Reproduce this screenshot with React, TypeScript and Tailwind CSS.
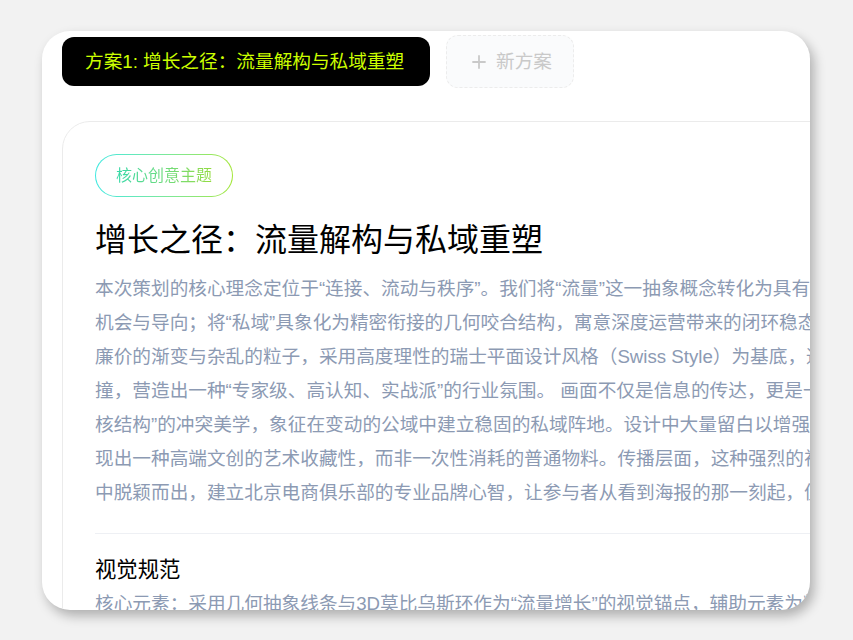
import { memo } from "react";

const introLines = [
  "本次策划的核心理念定位于“连接、流动与秩序”。我们将“流量”这一抽象概念转化为具有方向感的动态光束，象征",
  "机会与导向；将“私域”具象化为精密衔接的几何咬合结构，寓意深度运营带来的闭环稳态与长期价值。视觉上摒弃",
  "廉价的渐变与杂乱的粒子，采用高度理性的瑞士平面设计风格（Swiss Style）为基底，通过冷静与热烈的碰",
  "撞，营造出一种“专家级、高认知、实战派”的行业氛围。 画面不仅是信息的传达，更是一种“流动线条”与“坚",
  "核结构”的冲突美学，象征在变动的公域中建立稳固的私域阵地。设计中大量留白以增强呼吸感与高级感，呈",
  "现出一种高端文创的艺术收藏性，而非一次性消耗的普通物料。传播层面，这种强烈的视觉张力能在信息流",
  "中脱颖而出，建立北京电商俱乐部的专业品牌心智，让参与者从看到海报的那一刻起，便感受到价值。",
];

const specLines = [
  "核心元素：采用几何抽象线条与3D莫比乌斯环作为“流量增长”的视觉锚点，辅助元素为精密网格与坐标刻度。",
];

const PlusIcon = () => (
  <svg width="14" height="14" viewBox="0 0 14 14" fill="none">
    <path d="M7 1v12M1 7h12" stroke="currentColor" strokeWidth="1.8" strokeLinecap="round" />
  </svg>
);

const App = () => {
  return (
    <div
      className="min-h-screen bg-[#f2f2f2] pt-[31px] pl-[42px]"
      style={{ fontFamily: '"Liberation Sans", "Noto Sans CJK SC", sans-serif' }}
    >
      <div className="w-[768px] h-[579px] bg-white rounded-[28px] shadow-[4px_6px_12px_rgba(0,0,0,0.28)] overflow-hidden flex flex-col">
        {/* tabs */}
        <div className="flex items-center gap-4 pl-5 pt-1">
          <div className="h-[49px] w-[368px] pl-[23px] rounded-xl bg-black flex items-center text-[18.67px] text-[#ccff00] whitespace-nowrap">
            方案1: 增长之径：流量解构与私域重塑
          </div>
          <div className="h-[53px] w-[128px] pl-[25px] rounded-xl border border-dashed border-[#ececec] bg-[#fafbfc] flex items-center gap-[10px] text-[18.67px] text-[#c9c9c9] whitespace-nowrap">
            <PlusIcon />
            新方案
          </div>
        </div>

        {/* plan card */}
        <div className="mt-[33px] pl-5">
          <div className="w-[1100px] border border-[#ebebeb] rounded-[28px] pt-8 px-8 pb-10">
            <div className="inline-flex rounded-full p-px bg-gradient-to-r from-[#3ee8e0] to-[#a3e635]">
              <div className="h-[41px] px-5 rounded-full bg-white flex items-center">
                <span className="text-[16px] bg-gradient-to-r from-[#34d9a8] to-[#93dc3f] bg-clip-text text-transparent">
                  核心创意主题
                </span>
              </div>
            </div>

            <h1 className="mt-[23px] text-[32px] leading-[40px] text-black font-normal">
              增长之径：流量解构与私域重塑
            </h1>

            <p className="mt-3 text-[18.67px] leading-[34px] text-[#8c9ab3]">
              {introLines.map((line) => (
                <span key={line} className="block whitespace-nowrap">
                  {line}
                </span>
              ))}
            </p>

            <div className="mt-[23px] h-px bg-[#eef0f4]" />

            <h2 className="mt-[22px] text-[21.33px] leading-[28px] text-black font-normal">
              视觉规范
            </h2>
            <p className="mt-[3px] text-[18.67px] leading-[34px] text-[#8c9ab3]">
              {specLines.map((line) => (
                <span key={line} className="block whitespace-nowrap">
                  {line}
                </span>
              ))}
            </p>
          </div>
        </div>
      </div>
    </div>
  );
};

export default memo(App);
